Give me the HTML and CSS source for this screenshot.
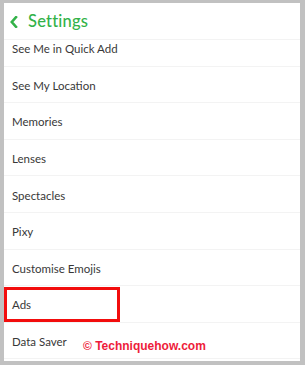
FILE: index.html
```html
<!DOCTYPE html>
<html>
<head>
<meta charset="utf-8">
<link rel="stylesheet" href="styles.css">
</head>
<body>
<div class="frame">
  <div class="panel">
    <div class="header">
      <svg class="back" width="8" height="12" viewBox="0 0 8 12"><polyline points="6,1.2 1.8,6 6,10.8" fill="none" stroke="#33b249" stroke-width="2.6" stroke-linecap="square" stroke-linejoin="miter"/></svg>
      <span class="title">Settings</span>
    </div>
    <div class="list-wrap">
      <ul class="list">
        <li class="row">See Me in Quick Add</li>
        <li class="row">See My Location</li>
        <li class="row">Memories</li>
        <li class="row">Lenses</li>
        <li class="row">Spectacles</li>
        <li class="row">Pixy</li>
        <li class="row">Customise Emojis</li>
        <li class="row row-ads">Ads<span class="highlight"></span></li>
        <li class="row">Data Saver</li>
      </ul>
      <div class="watermark">© Techniquehow.com</div>
    </div>
  </div>
</div>
</body>
</html>
```

FILE: styles.css
```css
html, body {
  margin: 0;
  padding: 0;
}
body {
  width: 305px;
  height: 365px;
  background: #c1c1c1;
  font-family: "Lato", "Open Sans", sans-serif;
  overflow: hidden;
}
.frame {
  padding: 3px 5px 4px 4px;
  height: 365px;
  box-sizing: border-box;
}
.panel {
  background: #fff;
  height: 358px;
  display: flex;
  flex-direction: column;
}
.header {
  height: 37px;
  box-sizing: border-box;
  border-bottom: 1px solid #f3f3f3;
  display: flex;
  align-items: center;
  padding-left: 6px;
  gap: 10px;
}
.back {
  margin-top: 1px;
}
.title {
  color: #33b249;
  font-size: 16.5px;
  font-weight: 500;
  letter-spacing: 0.2px;
}
.list-wrap {
  position: relative;
  height: 319px;
  overflow: hidden;
}
.list {
  list-style: none;
  margin: -10px 0 0 0;
  padding: 0;
}
.row {
  position: relative;
  height: 36.6px;
  box-sizing: border-box;
  border-bottom: 1px solid #f3f3f3;
  display: flex;
  align-items: center;
  padding-left: 8px;
  padding-top: 2px;
  font-size: 11.5px;
  color: #383838;
}
.highlight {
  position: absolute;
  left: 0;
  top: 1px;
  width: 116px;
  height: 35px;
  box-sizing: border-box;
  border: 3px solid #f20d0d;
}
.watermark {
  position: absolute;
  left: 79px;
  bottom: 6px;
  color: #ee1c3a;
  font-family: "Liberation Sans", Arial, sans-serif;
  font-weight: bold;
  font-size: 12px;
}
```
